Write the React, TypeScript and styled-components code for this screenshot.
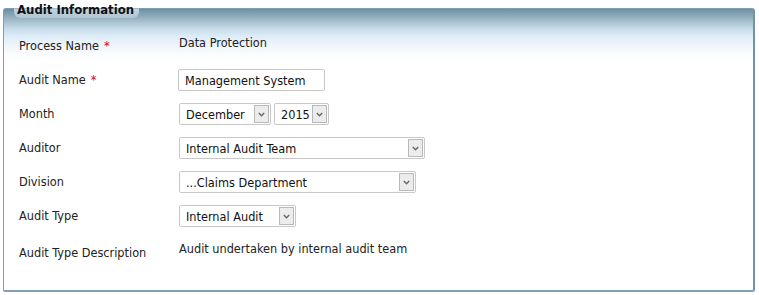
import React from "react";
import styled, { createGlobalStyle } from "styled-components";

const Global = createGlobalStyle`
  html, body { margin: 0; padding: 0; background: #ffffff; }
  body { font-family: "DejaVu Sans Condensed", "DejaVu Sans", sans-serif; font-size: 12.6px; color: #222; }
`;

const Page = styled.div`
  padding: 8px 0 0 3px;
`;

const Panel = styled.div`
  position: relative;
  width: 749px;
  height: 281px;
  border: 1px solid #7f9db0;
  border-right: 2px solid #6f94a7;
  border-bottom: 2px solid #7f9fb2;
  border-radius: 3px 3px 2px 2px;
  background: linear-gradient(
    to bottom,
    #6e8fa2 0px,
    #9bb6c6 10px,
    #c8dcea 20px,
    #dfedf8 28px,
    #eef5fb 36px,
    #fbfdfe 46px,
    #ffffff 56px
  );
`;

const Legend = styled.div`
  position: absolute;
  left: 10px;
  top: -7px;
  padding: 0 5px 1px 3px;
  font-family: "DejaVu Sans Condensed", "DejaVu Sans", sans-serif;
  font-weight: bold;
  font-size: 13px;
  line-height: 15px;
  color: #111;
  background: linear-gradient(to bottom, rgba(255,255,255,0) 0px, rgba(255,255,255,0) 6px, #c3d3de 7px, #b2c6d3 15px);
  border-radius: 0 0 6px 6px;
`;

const Rows = styled.div`
  display: flex;
  flex-direction: column;
  padding: 20px 0 0 15px;
`;

const Row = styled.div<{ $h?: number }>`
  display: flex;
  align-items: center;
  height: ${(p) => p.$h ?? 34}px;
`;

const Label = styled.div`
  width: 160px;
  color: #222;
  line-height: 14px;
`;

const Required = styled.span`
  color: #e3002b;
  margin-left: 5px;
`;

const Value = styled.div<{ $up?: number }>`
  color: #222;
  line-height: 14px;
  position: relative;
  top: ${(p) => -(p.$up ?? 0)}px;
`;

const TextInput = styled.div`
  box-sizing: border-box;
  width: 147px;
  height: 22px;
  border: 1px solid #c8c8c8;
  border-radius: 2px;
  padding: 0 6px;
  display: flex;
  align-items: center;
  margin-left: -1px;
  color: #111;
  background: #fff;
`;

const Controls = styled.div`
  display: flex;
  gap: 3px;
`;

const SelectBox = styled.div<{ $w: number }>`
  box-sizing: border-box;
  width: ${(p) => p.$w}px;
  height: 22px;
  border: 1px solid #c8c8c8;
  border-radius: 2px;
  display: flex;
  align-items: stretch;
  background: #fff;
  padding: 1px;
`;

const SelectText = styled.div`
  flex: 1;
  display: flex;
  align-items: center;
  padding-left: 5px;
  color: #111;
  white-space: nowrap;
  overflow: hidden;
`;

const Arrow = styled.div`
  box-sizing: border-box;
  width: 15px;
  border: 1px solid #b9b9b9;
  background: #ececec;
  display: flex;
  align-items: center;
  justify-content: center;
`;

const Chevron = () => (
  <svg width="7" height="5" viewBox="0 0 7 5">
    <path d="M0.8 1 L3.5 3.7 L6.2 1" fill="none" stroke="#666" strokeWidth="1.4" />
  </svg>
);

const Select = ({ w, text }: { w: number; text: string }) => (
  <SelectBox $w={w}>
    <SelectText>{text}</SelectText>
    <Arrow>
      <Chevron />
    </Arrow>
  </SelectBox>
);

export default function App() {
  return (
    <>
      <Global />
      <Page>
        <Panel>
          <Legend>Audit Information</Legend>
          <Rows>
            <Row>
              <Label>
                Process Name<Required>*</Required>
              </Label>
              <Value $up={3}>Data Protection</Value>
            </Row>
            <Row>
              <Label>
                Audit Name<Required>*</Required>
              </Label>
              <TextInput>Management System</TextInput>
            </Row>
            <Row>
              <Label>Month</Label>
              <Controls>
                <Select w={92} text="December" />
                <Select w={55} text="2015" />
              </Controls>
            </Row>
            <Row>
              <Label>Auditor</Label>
              <Select w={246} text="Internal Audit Team" />
            </Row>
            <Row>
              <Label>Division</Label>
              <Select w={237} text="...Claims Department" />
            </Row>
            <Row>
              <Label>Audit Type</Label>
              <Select w={117} text="Internal Audit" />
            </Row>
            <Row $h={40}>
              <Label>Audit Type Description</Label>
              <Value $up={4}>Audit undertaken by internal audit team</Value>
            </Row>
          </Rows>
        </Panel>
      </Page>
    </>
  );
}
